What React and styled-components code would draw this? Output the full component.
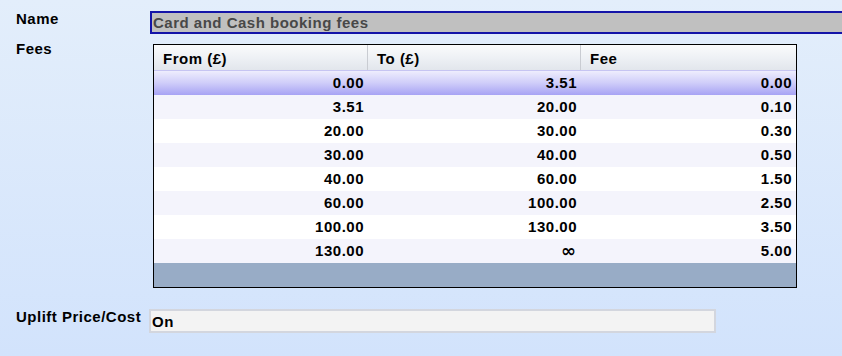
import React from 'react'
import styled, { createGlobalStyle } from 'styled-components'

const GlobalStyle = createGlobalStyle`
  html, body {
    margin: 0;
    padding: 0;
  }
  body {
    width: 842px;
    height: 356px;
    overflow: hidden;
    background: linear-gradient(to bottom, #e3eefb 0%, #d2e3fc 100%);
    font-family: 'Liberation Sans', Arial, sans-serif;
    font-weight: bold;
    font-size: 15px;
    letter-spacing: 0.5px;
  }
`

const rows = [
  ['0.00', '3.51', '0.00'],
  ['3.51', '20.00', '0.10'],
  ['20.00', '30.00', '0.30'],
  ['30.00', '40.00', '0.50'],
  ['40.00', '60.00', '1.50'],
  ['60.00', '100.00', '2.50'],
  ['100.00', '130.00', '3.50'],
  ['130.00', '∞', '5.00'],
]

export default function App() {
  return (
    <>
      <GlobalStyle />
      <Form>
        <Field>
          <Label>Name</Label>
          <NameInput>Card and Cash booking fees</NameInput>
        </Field>
        <Field $gap='10px'>
          <Label $shift='-3px'>Fees</Label>
          <Grid>
            <HeaderRow>
              <HeaderCell>From (£)</HeaderCell>
              <HeaderCell>To (£)</HeaderCell>
              <HeaderCell $last>Fee</HeaderCell>
            </HeaderRow>
            {rows.map((row, idx) => (
              <Row key={idx} $selected={idx === 0} $alt={idx % 2 === 1}>
                {row.map((val, i) => (
                  <Cell key={i} $infinity={val === '∞'}>{val}</Cell>
                ))}
              </Row>
            ))}
            <Filler />
          </Grid>
        </Field>
        <Field $gap='21px'>
          <Label>Uplift Price/Cost</Label>
          <UpliftInput>On</UpliftInput>
        </Field>
      </Form>
    </>
  )
}

const Form = styled.div`
  display: flex;
  flex-direction: column;
  padding-top: 11px;
`

const Field = styled.div`
  display: flex;
  align-items: flex-start;
  margin-top: ${props => props.$gap || '0'};
`

const Label = styled.div`
  width: 134px;
  padding-left: 16px;
  margin-top: ${props => props.$shift || '0'};
  color: #000;
  line-height: 15px;
  white-space: nowrap;
  flex-shrink: 0;
`

const NameInput = styled.div`
  width: 700px;
  height: 19px;
  box-sizing: content-box;
  border: 2px solid #1414a8;
  background: #c0c0c0;
  color: #484848;
  padding-left: 1px;
  line-height: 20px;
  white-space: nowrap;
  flex-shrink: 0;
`

const Grid = styled.div`
  margin-left: 3px;
  width: 642px;
  border: 1px solid #000;
  background: #98acc6;
  display: flex;
  flex-direction: column;
`

const HeaderRow = styled.div`
  display: grid;
  grid-template-columns: 214px 213px 215px;
  height: 25px;
  background: linear-gradient(to bottom, #fafbfc 0%, #eef1f5 50%, #e2e6ec 100%);
  border-bottom: 1px solid #c6c4f2;
`

const HeaderCell = styled.div`
  padding-left: 9px;
  padding-top: 1px;
  line-height: 26px;
  height: 24px;
  overflow: hidden;
  color: #000;
  border-right: ${props => (props.$last ? 'none' : '1px solid #c9ccd2')};
`

const Row = styled.div`
  display: grid;
  grid-template-columns: 214px 213px 215px;
  height: 24px;
  background: ${props =>
    props.$selected
      ? 'linear-gradient(to bottom, #eeedfd 0%, #cfcdf9 50%, #a7a3f4 100%)'
      : props.$alt
      ? '#f4f4fc'
      : '#ffffff'};
`

const Cell = styled.div`
  text-align: right;
  line-height: 24px;
  color: #000;
  font-family: ${props =>
    props.$infinity ? "'DejaVu Sans', sans-serif" : "'Liberation Sans', Arial, sans-serif"};
  font-weight: ${props => (props.$infinity ? 900 : 'bold')};
  font-size: ${props => (props.$infinity ? '18px' : '15px')};
  letter-spacing: ${props => (props.$infinity ? '0' : '0.5px')};
  padding-right: ${props => (props.$infinity ? '5px' : '4px')};
`

const Filler = styled.div`
  height: 24px;
`

const UpliftInput = styled.div`
  width: 562px;
  height: 20px;
  box-sizing: content-box;
  border: 2px solid #d3d6de;
  background: #f3f3f3;
  color: #000;
  padding-left: 1px;
  line-height: 22px;
  flex-shrink: 0;
  margin-left: -1px;
`
